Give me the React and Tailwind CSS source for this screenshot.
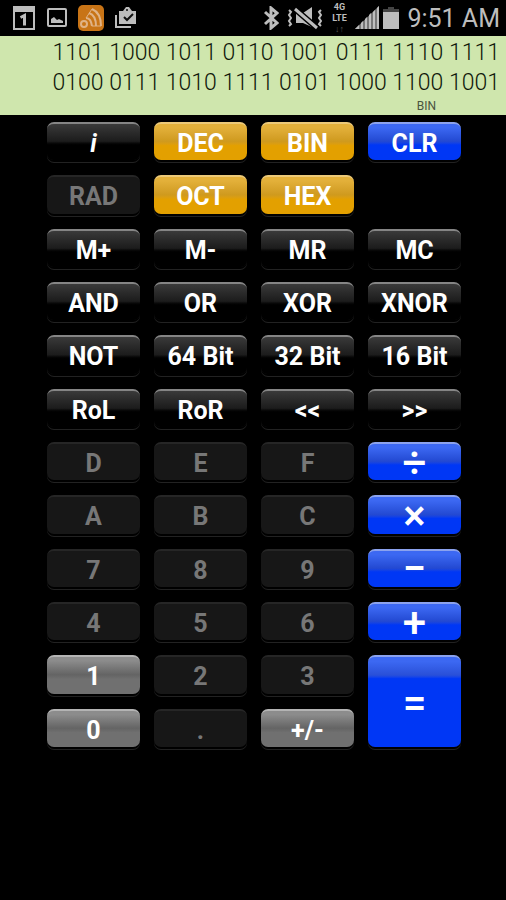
import { useState } from 'react'

const keys = [
  { label: 'i', type: 'dark', italic: true },
  { label: 'DEC', type: 'gold' },
  { label: 'BIN', type: 'gold' },
  { label: 'CLR', type: 'blue' },
  { label: 'RAD', type: 'off' },
  { label: 'OCT', type: 'gold' },
  { label: 'HEX', type: 'gold' },
  null,
  { label: 'M+', type: 'dark' },
  { label: 'M-', type: 'dark' },
  { label: 'MR', type: 'dark' },
  { label: 'MC', type: 'dark' },
  { label: 'AND', type: 'dark' },
  { label: 'OR', type: 'dark' },
  { label: 'XOR', type: 'dark' },
  { label: 'XNOR', type: 'dark' },
  { label: 'NOT', type: 'dark' },
  { label: '64 Bit', type: 'dark' },
  { label: '32 Bit', type: 'dark' },
  { label: '16 Bit', type: 'dark' },
  { label: 'RoL', type: 'dark' },
  { label: 'RoR', type: 'dark' },
  { label: '<<', type: 'dark' },
  { label: '>>', type: 'dark' },
  { label: 'D', type: 'off' },
  { label: 'E', type: 'off' },
  { label: 'F', type: 'off' },
  { label: '÷', type: 'blue', operator: true },
  { label: 'A', type: 'off' },
  { label: 'B', type: 'off' },
  { label: 'C', type: 'off' },
  { label: '×', type: 'blue', operator: true },
  { label: '7', type: 'off' },
  { label: '8', type: 'off' },
  { label: '9', type: 'off' },
  { label: '−', type: 'blue', operator: true },
  { label: '4', type: 'off' },
  { label: '5', type: 'off' },
  { label: '6', type: 'off' },
  { label: '+', type: 'blue', operator: true },
  { label: '1', type: 'gray' },
  { label: '2', type: 'off' },
  { label: '3', type: 'off' },
  { label: '=', type: 'tall', operator: true },
  { label: '0', type: 'gray' },
  { label: '.', type: 'off' },
  { label: '+/-', type: 'gray' },
]

const keyStyles = {
  dark: 'bg-linear-to-b from-[#3a3a3a] via-[#1c1c1c] via-48% to-black to-62% border-[#858585] text-white',
  gold: 'bg-linear-to-b from-[#e3b03a] from-10% via-[#cf9a1e] via-48% to-[#e3a000] to-60% border-[#ecc978] text-white',
  blue: 'bg-linear-to-b from-[#3c68f2] from-10% via-[#2349d2] via-48% to-[#0037f5] to-58% border-[#8ba2ee] text-white',
  tall: 'row-span-2 bg-linear-to-b from-[#3c68f2] from-5% via-[#2a50d8] via-20% to-[#0037f5] to-24% border-[#8ba2ee] text-white',
  gray: 'bg-linear-to-b from-[#8c8c8c] from-10% via-[#646464] via-48% to-[#707070] to-60% border-[#b4b4b4] text-white',
  off: 'bg-[#171717] border-[#262626] text-[#777777]',
}

const Key = ({ item, onPress }) => (
  <button
    type="button"
    disabled={item.type === 'off'}
    onClick={() => onPress(item.label)}
    className={`flex items-center justify-center rounded-[7px] border-t-2 shadow-[0_2px_0_#000,0_3px_0_#222] ${keyStyles[item.type]} ${
      item.italic ? 'italic' : ''
    } ${item.operator ? 'pt-px text-[42px] leading-8 font-medium' : 'pt-1 text-[25px] leading-8 font-bold'}`}
  >
    {item.label}
  </button>
)

const StatusBar = () => (
  <header className="flex h-9 items-center justify-between bg-black pl-3 pr-1.5 text-[#bdbdbd]">
    <div className="flex items-center gap-[11px]">
      {/* Calendar */}
      <svg className="h-6 w-6" viewBox="0 0 24 24" fill="none">
        <rect x="2" y="1" width="20" height="22" stroke="currentColor" strokeWidth="2" />
        <path d="M1 0h22v6H1z" fill="currentColor" />
        <path d="M8.5 11.5l4-2v10" stroke="currentColor" strokeWidth="3" />
      </svg>
      {/* Picture */}
      <svg className="h-5 w-5" viewBox="0 0 20 20" fill="none">
        <rect x="1" y="1" width="18" height="17" rx="1" stroke="currentColor" strokeWidth="2" />
        <path d="M4 15v-4l3-2 3 3 2-1 4 2v2z" fill="currentColor" />
      </svg>
      {/* Feed */}
      <svg className="h-[26px] w-[26px]" viewBox="0 0 26 26" fill="none">
        <rect width="26" height="26" rx="5" fill="#c87416" />
        <circle cx="6" cy="19" r="3" stroke="#e0b386" strokeWidth="2" />
        <path d="M8 13c4 0 5 3 6 8M11 8c6 2 7 7 7 13M14 4c7 3 9 9 9 17" stroke="#e0b386" strokeWidth="2" />
        <path d="M8 13l6-9M14 21h9" stroke="#e0b386" />
      </svg>
      {/* Briefcase with tick */}
      <svg className="h-6 w-6" viewBox="0 0 24 24" fill="none">
        <path d="M1 9v12h15" stroke="currentColor" strokeWidth="2" />
        <path d="M4 5h4l3-4h3l3 4h4v13H4z" fill="currentColor" />
        <path d="M9 11l3 3 6-6" stroke="#111" strokeWidth="2" />
        <circle cx="12" cy="4" r="1" fill="#111" />
      </svg>
    </div>
    <div className="flex items-center gap-2">
      {/* Bluetooth */}
      <svg className="h-6 w-4" viewBox="0 0 16 24" fill="none" stroke="currentColor" strokeWidth="3">
        <path d="M2 6l12 11-6 5V2l6 5L2 18" />
      </svg>
      {/* Muted, vibrating */}
      <svg className="h-6 w-9" viewBox="0 0 36 24" fill="none" stroke="currentColor">
        <path d="M2 4l2 2-2 3 2 3-2 3 2 3-2 2M34 4l-2 2 2 3-2 3 2 3-2 3 2 2" strokeWidth="2" />
        <path d="M9 7h7l9-6v20l-9-4H9z" fill="currentColor" stroke="none" />
        <path d="M8 3l22 19" stroke="#000" strokeWidth="6" />
        <path d="M8 3l22 19" strokeWidth="3" />
      </svg>
      <div className="flex w-4 flex-col items-center text-[9px] leading-[11px] font-bold">
        <span>4G</span>
        <span>LTE</span>
        <span className="text-[#555]">↓↑</span>
      </div>
      <div className="flex items-center gap-1">
        {/* Signal */}
        <svg className="h-6 w-6" viewBox="0 0 24 24">
          <path d="M0 23L24 0v23z" fill="#777" />
          <path
            d="M0 23l4-4v4zM6 23v-6l2-2v8zM10 23V13l2-2v12zM14 23V9l2-2v16zM18 23V6l2-2v19zM22 23V2l2-2v23z"
            fill="currentColor"
          />
        </svg>
        {/* Battery */}
        <svg className="h-6 w-4" viewBox="0 0 16 24">
          <path d="M5 1h6v2h5v3H0V3h5z" fill="#444" />
          <path d="M0 6h16v17H0z" fill="currentColor" />
        </svg>
      </div>
      <time className="pt-0.5 text-[25px] leading-8">9:51 AM</time>
    </div>
  </header>
)

const App = () => {
  const [lines, setLines] = useState([
    '1101 1000 1011 0110 1001 0111 1110 1111',
    '0100 0111 1010 1111 0101 1000 1100 1001',
  ])

  const handlePress = (label) => {
    if (label === 'CLR') {
      setLines(['', '0'])
    }
  }

  return (
    <div className="min-h-screen bg-black font-['Roboto',sans-serif]">
      <StatusBar />

      {/* Display */}
      <output className="block h-[79px] bg-[#cfe6ad] pt-0.5 pr-1.5 text-right text-[23px] leading-[30px] font-light whitespace-nowrap text-[#10180a]">
        {lines.map((line, index) => (
          <div key={index}>{line}</div>
        ))}
        <div className="pr-16 text-xs leading-4 font-normal text-[#4a5440]">BIN</div>
      </output>

      {/* Keypad */}
      <main className="mt-[7px] grid h-[625px] grid-cols-4 grid-rows-12 gap-x-[14px] gap-y-[15px] pl-[47px] pr-[45px]">
        {keys.map((item, index) =>
          item ? <Key key={index} item={item} onPress={handlePress} /> : <div key={index} />
        )}
      </main>
    </div>
  )
}

export default App
